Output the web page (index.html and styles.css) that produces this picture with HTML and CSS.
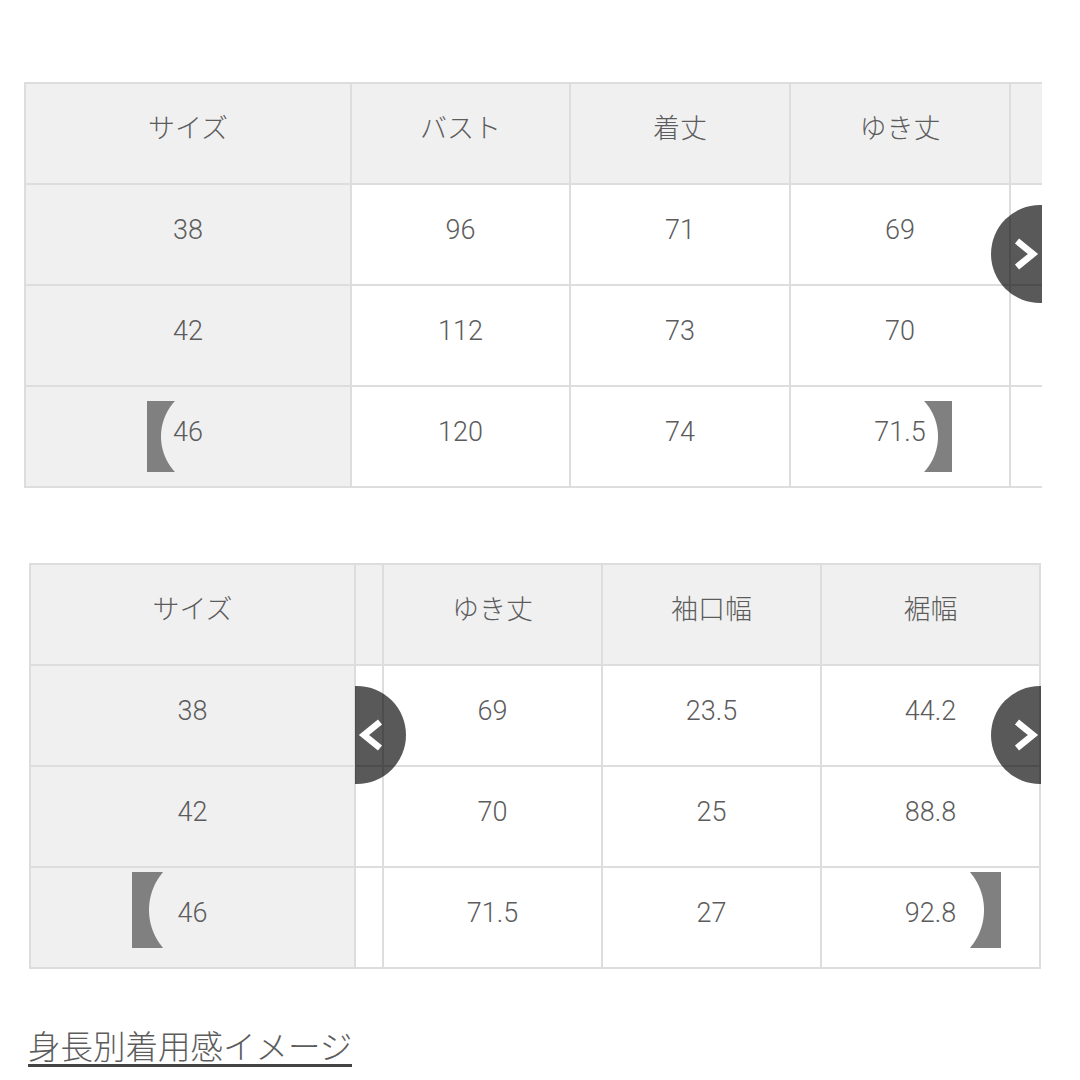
FILE: index.html
```html
<!DOCTYPE html>
<html lang="ja">
<head>
<meta charset="utf-8">
<title>サイズ表</title>
<link rel="stylesheet" href="styles.css">
</head>
<body>
<main class="page">
  <section class="scroller scroller-one">
    <div class="sheet sheet-one">
      <div class="cell head">サイズ</div>
      <div class="cell head">バスト</div>
      <div class="cell head">着丈</div>
      <div class="cell head">ゆき丈</div>
      <div class="cell head"></div>

      <div class="cell side">38</div>
      <div class="cell">96</div>
      <div class="cell">71</div>
      <div class="cell">69</div>
      <div class="cell"></div>

      <div class="cell side">42</div>
      <div class="cell">112</div>
      <div class="cell">73</div>
      <div class="cell">70</div>
      <div class="cell"></div>

      <div class="cell side">46</div>
      <div class="cell">120</div>
      <div class="cell">74</div>
      <div class="cell">71.5</div>
      <div class="cell"></div>
    </div>
    <span class="bracket small open b1-open"></span>
    <span class="bracket small close b1-close"></span>
    <svg class="arrow a1-next" width="51" height="98" viewBox="0 0 51 98"><circle cx="49" cy="49" r="49"/><path d="M26 36 L42 49 L26 62"/></svg>
  </section>

  <section class="scroller scroller-two">
    <div class="sheet sheet-two">
      <div class="cell head">サイズ</div>
      <div class="cell head"></div>
      <div class="cell head">ゆき丈</div>
      <div class="cell head">袖口幅</div>
      <div class="cell head">裾幅</div>

      <div class="cell side">38</div>
      <div class="cell"></div>
      <div class="cell">69</div>
      <div class="cell">23.5</div>
      <div class="cell">44.2</div>

      <div class="cell side">42</div>
      <div class="cell"></div>
      <div class="cell">70</div>
      <div class="cell">25</div>
      <div class="cell">88.8</div>

      <div class="cell side">46</div>
      <div class="cell"></div>
      <div class="cell">71.5</div>
      <div class="cell">27</div>
      <div class="cell">92.8</div>
    </div>
    <span class="bracket large open b2-open"></span>
    <span class="bracket large close b2-close"></span>
    <svg class="arrow a2-prev" width="52" height="98" viewBox="0 0 52 98"><circle cx="2" cy="49" r="49"/><path d="M25 36 L9 49 L25 62"/></svg>
    <svg class="arrow a2-next" width="50" height="98" viewBox="0 0 50 98"><circle cx="49" cy="49" r="49"/><path d="M26 36 L42 49 L26 62"/></svg>
  </section>

  <h2 class="title"><span class="title-text">身長別着用感イメージ</span></h2>
</main>
</body>
</html>
```

FILE: styles.css
```css
html, body {
  margin: 0;
  padding: 0;
  background: #ffffff;
}

body {
  font-family: Roboto, "Noto Sans CJK JP Light", "Noto Sans CJK JP DemiLight", "Noto Sans CJK JP", sans-serif;
  font-weight: 300;
  color: #5c5c5c;
}

.page {
  padding-top: 82px;
}

.scroller {
  position: relative;
  overflow: hidden;
}

.scroller-one {
  margin-left: 24px;
  width: 1018px;
}

.scroller-two {
  margin-left: 29px;
  width: 1012px;
  margin-top: 75px;
}

.sheet {
  display: grid;
  width: max-content;
  border-top: 2px solid #dddddd;
  border-left: 2px solid #dddddd;
}

.sheet-one {
  grid-template-columns: 326px 219px 220px 220px 219px;
}

.sheet-two {
  grid-template-columns: 325px 28px 219px 219px 219px;
}

.cell {
  box-sizing: border-box;
  height: 101px;
  border-right: 2px solid #dddddd;
  border-bottom: 2px solid #dddddd;
  display: flex;
  align-items: center;
  justify-content: center;
  padding-bottom: 9px;
  font-size: 27px;
  line-height: 1;
  background: #ffffff;
}

.head,
.side {
  background: #f0f0f0;
}

.bracket {
  position: absolute;
  background: #808080;
}

.bracket.small {
  width: 29px;
  height: 71px;
  top: 319px;
}

.bracket.large {
  width: 31px;
  height: 76px;
  top: 309px;
}

.bracket.small.open {
  -webkit-mask: radial-gradient(circle 52px at 66px 50%, transparent 51.5px, #000 52.5px);
  mask: radial-gradient(circle 52px at 66px 50%, transparent 51.5px, #000 52.5px);
}

.bracket.small.close {
  -webkit-mask: radial-gradient(circle 52px at -37px 50%, transparent 51.5px, #000 52.5px);
  mask: radial-gradient(circle 52px at -37px 50%, transparent 51.5px, #000 52.5px);
}

.bracket.large.open {
  -webkit-mask: radial-gradient(circle 58px at 75px 50%, transparent 57.5px, #000 58.5px);
  mask: radial-gradient(circle 58px at 75px 50%, transparent 57.5px, #000 58.5px);
}

.bracket.large.close {
  -webkit-mask: radial-gradient(circle 58px at -44px 50%, transparent 57.5px, #000 58.5px);
  mask: radial-gradient(circle 58px at -44px 50%, transparent 57.5px, #000 58.5px);
}

.b1-open { left: 123px; }
.b1-close { left: 899px; }
.b2-open { left: 103px; }
.b2-close { left: 941px; }

.arrow {
  position: absolute;
  top: 123px;
}

.arrow circle {
  fill: rgba(0, 0, 0, 0.65);
}

.arrow path {
  fill: none;
  stroke: #ffffff;
  stroke-width: 6.5;
  stroke-linecap: butt;
  stroke-linejoin: miter;
}

.a1-next { left: 967px; }
.a2-prev { left: 326px; }
.a2-next { left: 962px; }

.title {
  margin: 60px 0 0 28px;
  font-size: 32.5px;
  font-weight: 300;
  line-height: 38px;
  color: #5c5c5c;
}

.title-text {
  display: inline-block;
  border-bottom: 3px solid #444444;
  line-height: 32px;
  padding-bottom: 0;
}
```
